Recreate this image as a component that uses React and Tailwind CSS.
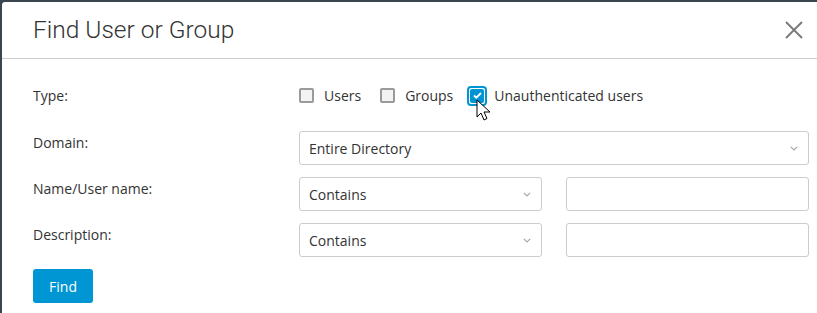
import React from "react";

const Chevron = () => (
	<svg width="8" height="5" viewBox="0 0 8 5" className="text-[#a8a8a8]">
		<path d="M0.8 0.8l3.2 3.2 3.2-3.2" fill="none" stroke="currentColor" strokeWidth="1.2" />
	</svg>
);

const Checkbox = ({ label, checked }) =>
	checked ? (
		<label className="flex items-center gap-[7px]">
			<span className="relative flex h-[20px] w-[20px] items-center justify-center rounded-[4px] border-2 border-[#0094d2] bg-white">
				<span className="flex h-[14px] w-[14px] items-center justify-center rounded-[2px] bg-[#0094d2]">
					<svg width="9" height="7" viewBox="0 0 9 7">
						<path d="M1 3.5l2.3 2.2L8 1" fill="none" stroke="white" strokeWidth="1.8" />
					</svg>
				</span>
				<svg className="absolute left-[7px] top-[11px]" width="16" height="24" viewBox="0 0 16 24">
					<path d="M1 1v17l4-4 3 7 3-1.5-3-6.5h6z" fill="white" stroke="black" strokeWidth="1" strokeLinejoin="round" />
				</svg>
			</span>
			<span>{label}</span>
		</label>
	) : (
		<label className="flex items-center gap-[10px]">
			<span className="h-[15px] w-[15px] rounded-[2px] border-2 border-[#9a9a9a] bg-[#f3f3f3]" />
			<span>{label}</span>
		</label>
	);

const Select = ({ value, className }) => (
	<div className={`flex h-[34px] items-center justify-between rounded-[3px] border border-[#cccccc] bg-white pl-[9px] pr-[10px] ${className}`}>
		<span>{value}</span>
		<Chevron />
	</div>
);

const Row = ({ label, children, className = "" }) => (
	<div className={`flex items-start ${className}`}>
		<div className="w-[266px] pt-[1px]">{label}</div>
		<div className="flex flex-1 items-center">{children}</div>
	</div>
);

export default function App() {
	return (
		<div className="h-[313px] w-[817px] overflow-hidden bg-[#3a4550] pl-[2px] pt-[2px]">
			<div className="h-[400px] rounded-tl-[3px] bg-white font-['Open_Sans',sans-serif] text-[14px] text-[#333333]">
				<div className="flex h-[57px] items-center justify-between border-b border-[#cccccc] pl-[31px] pr-[14px]">
					<h2 className="font-['Roboto',sans-serif] text-[24.5px] font-light text-[#333333]">
						Find User or Group
					</h2>
					<svg width="18" height="18" viewBox="0 0 18 18" className="text-[#777777]">
						<path d="M1 1l16 16M17 1L1 17" stroke="currentColor" strokeWidth="1.8" />
					</svg>
				</div>
				<div className="pl-[31px] pr-[8px] pt-[26px]">
					<div className="flex items-center">
						<div className="w-[266px]">Type:</div>
						<div className="flex items-center gap-[19px]">
							<Checkbox label="Users" />
							<Checkbox label="Groups" />
							<div className="-ml-[5px]">
								<Checkbox label="Unauthenticated users" checked />
							</div>
						</div>
					</div>
					<Row label="Domain:" className="mt-[25px]">
						<Select value="Entire Directory" className="flex-1" />
					</Row>
					<Row label="Name/User name:" className="mt-[12px]">
						<Select value="Contains" className="w-[243px]" />
						<div className="ml-[24px] h-[34px] flex-1 rounded-[3px] border border-[#cccccc]" />
					</Row>
					<Row label="Description:" className="mt-[12px]">
						<Select value="Contains" className="w-[243px]" />
						<div className="ml-[24px] h-[34px] flex-1 rounded-[3px] border border-[#cccccc]" />
					</Row>
					<button className="mt-[12px] h-[34px] w-[60px] rounded-[3px] bg-[#0095d3] text-[14px] text-white">
						Find
					</button>
				</div>
			</div>
		</div>
	);
}
